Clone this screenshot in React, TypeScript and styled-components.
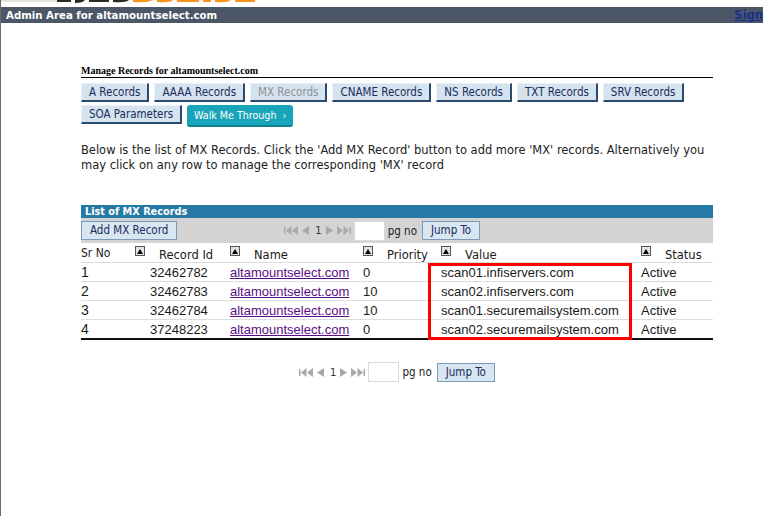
import React from "react";
import styled, { createGlobalStyle } from "styled-components";

const GlobalStyle = createGlobalStyle`
  html, body { margin: 0; padding: 0; background: #fff; }
  body { font-family: "DejaVu Sans Condensed", "DejaVu Sans", sans-serif; }
`;

const Page = styled.div`
  width: 763px;
  min-height: 516px;
  box-sizing: border-box;
  border-left: 1px solid #6a6a6a;
`;

const LogoStrip = styled.div`
  height: 7px;
  overflow: hidden;
  display: flex;
`;

const TopBar = styled.div`
  height: 16px;
  background: #4b5666;
  display: flex;
  align-items: center;
  justify-content: space-between;
  padding-left: 5px;
  overflow: hidden;
`;

const TopTitle = styled.span`
  color: #fff;
  font-family: "DejaVu Sans", sans-serif;
  font-weight: bold;
  font-size: 10.2px;
`;

const SignLink = styled.a`
  color: #1c2e8c;
  font-family: "DejaVu Sans", sans-serif;
  font-weight: bold;
  font-size: 11.5px;
  text-decoration: underline;
  white-space: nowrap;
  margin-right: 0;
`;

const Main = styled.div`
  width: 632px;
  margin-left: 80px;
  padding-top: 42px;
`;

const Heading = styled.div`
  font-family: "Liberation Serif", serif;
  font-weight: bold;
  font-size: 10px;
  color: #000;
  line-height: 11px;
  padding-bottom: 1px;
  border-bottom: 1px solid #000;
`;

const ButtonRows = styled.div`
  display: flex;
  flex-wrap: wrap;
  column-gap: 5px;
  row-gap: 3px;
  margin-top: 5px;
  align-items: flex-start;
`;

const TabButton = styled.button<{ $disabled?: boolean }>`
  height: 19px;
  padding: 0 7px;
  margin: 0;
  background: #d5e3ee;
  border-style: solid;
  border-width: 1px 2px 2px 1px;
  border-color: #e9f1f7 #2a4a6e #2a4a6e #e9f1f7;
  color: ${(p) => (p.$disabled ? "#8c9298" : "#1b2b5c")};
  font-family: "DejaVu Sans Condensed", "DejaVu Sans", sans-serif;
  font-size: 11.5px;
  line-height: 15px;
  cursor: pointer;
`;

const WalkButton = styled.button`
  height: 22px;
  margin: 0;
  padding: 0 7px;
  background: #19a5b9;
  border: none;
  border-bottom: 2px solid #11808f;
  border-radius: 3px;
  color: #fff;
  font-family: "DejaVu Sans Condensed", "DejaVu Sans", sans-serif;
  font-size: 10.6px;
  display: flex;
  align-items: center;
  gap: 6px;
  cursor: pointer;
`;

const Description = styled.p`
  margin: 15px 0 0 0;
  font-size: 12.75px;
  line-height: 15px;
  color: #222;
`;

const TableBox = styled.div`
  margin-top: 33px;
  position: relative;
`;

const TableTitle = styled.div`
  height: 13px;
  background: #2679a5;
  color: #fff;
  font-weight: bold;
  font-size: 10.8px;
  line-height: 13px;
  padding-left: 4px;
`;

const Toolbar = styled.div`
  height: 25px;
  background: #d4d4d4;
  display: flex;
  align-items: center;
`;

const LightButton = styled.button`
  height: 19px;
  margin: 0;
  padding: 0 8px;
  background: #d7e6f1;
  border: 1px solid #7f9ab5;
  color: #1b2b5c;
  font-family: "DejaVu Sans Condensed", "DejaVu Sans", sans-serif;
  font-size: 11.5px;
  line-height: 15px;
  cursor: pointer;
`;

const Pager = styled.div<{ $offset: number }>`
  display: flex;
  align-items: center;
  margin-left: ${(p) => p.$offset}px;
  font-size: 11.5px;
  color: #222;
`;

const PagerCentered = styled.div`
  display: flex;
  justify-content: center;
  margin-top: 22px;
`;

const PageNum = styled.span`
  font-family: "DejaVu Sans", sans-serif;
  font-size: 10px;
  color: #333;
  margin: 0 4px 0 6px;
`;

const PageInput = styled.input`
  width: 31px;
  height: 20px;
  box-sizing: border-box;
  border: 1px solid #dadada;
  background: #fff;
  margin: 0 3px 0 3px;
  padding: 0;
`;

const PgLabel = styled.span`
  margin-right: 5px;
`;

const Grid = styled.div`
  display: grid;
  grid-template-columns: 54px 95px 133px 78px 200px 72px;
  font-family: "Liberation Sans", Arial, sans-serif;
  font-size: 13px;
  color: #1a1a1a;
  border-bottom: 2px solid #111;
`;

const HeadCell = styled.div`
  height: 20px;
  display: flex;
  align-items: flex-start;
  gap: 14px;
  border-bottom: 1px solid #dcdcdc;
  box-sizing: border-box;
`;

const HeadText = styled.span<{ $first?: boolean }>`
  font-family: ${(p) =>
    p.$first
      ? `"DejaVu Sans Condensed", "DejaVu Sans", sans-serif`
      : `"DejaVu Sans", sans-serif`};
  font-size: ${(p) => (p.$first ? "12px" : "11.5px")};
  line-height: 14px;
  margin-top: ${(p) => (p.$first ? 3 : 5)}px;
`;

const SortIcon = styled.span`
  width: 10px;
  height: 10px;
  box-sizing: border-box;
  border: 1px solid #555;
  background: #e4e4e4;
  display: inline-flex;
  align-items: center;
  justify-content: center;
  margin-top: 3px;
  flex-shrink: 0;
`;

const Cell = styled.div<{ $pad?: number; $last?: boolean }>`
  height: ${(p) => (p.$last ? 18 : 19)}px;
  box-sizing: border-box;
  display: flex;
  align-items: center;
  padding-left: ${(p) => p.$pad ?? 0}px;
  border-bottom: ${(p) => (p.$last ? "none" : "1px solid #dcdcdc")};
`;

const FirstCell = styled(Cell)`
  font-size: 14px;
`;

const DomainLink = styled.a`
  color: #5b0d87;
  text-decoration: underline;
  cursor: pointer;
`;

const Highlight = styled.div`
  position: absolute;
  left: 347px;
  top: 58px;
  width: 204px;
  height: 77px;
  box-sizing: border-box;
  border: 3px solid #f00;
  pointer-events: none;
`;

const Tri = ({ dir }: { dir: "l" | "r" }) => (
  <svg width="7" height="9" viewBox="0 0 7 9">
    {dir === "l" ? (
      <polygon points="7,0 7,9 0,4.5" fill="#a9a9a9" />
    ) : (
      <polygon points="0,0 0,9 7,4.5" fill="#a9a9a9" />
    )}
  </svg>
);

const DoubleTri = ({ dir }: { dir: "l" | "r" }) => (
  <svg width="14" height="9" viewBox="0 0 14 9">
    {dir === "l" ? (
      <>
        <rect x="0" y="1" width="1.5" height="7" fill="#a9a9a9" />
        <polygon points="7.5,0 7.5,9 2,4.5" fill="#a9a9a9" />
        <polygon points="14,0 14,9 8,4.5" fill="#a9a9a9" />
      </>
    ) : (
      <>
        <polygon points="0,0 0,9 6,4.5" fill="#a9a9a9" />
        <polygon points="6.5,0 6.5,9 12,4.5" fill="#a9a9a9" />
        <rect x="12.5" y="1" width="1.5" height="7" fill="#a9a9a9" />
      </>
    )}
  </svg>
);

const ArrowGap = styled.span`
  display: inline-flex;
  align-items: center;
  gap: 4px;
`;

const PagerControls = ({ offset }: { offset: number }) => (
  <Pager $offset={offset}>
    <ArrowGap>
      <DoubleTri dir="l" />
      <Tri dir="l" />
    </ArrowGap>
    <PageNum>1</PageNum>
    <ArrowGap>
      <Tri dir="r" />
      <DoubleTri dir="r" />
    </ArrowGap>
    <PageInput />
    <PgLabel>pg no</PgLabel>
    <LightButton>Jump To</LightButton>
  </Pager>
);

const Sort = () => (
  <SortIcon>
    <svg width="6" height="5" viewBox="0 0 6 5">
      <polygon points="3,0 6,5 0,5" fill="#000" />
    </svg>
  </SortIcon>
);

const Logo = () => (
  <svg width="260" height="7" viewBox="0 0 260 7">
    <rect x="0" y="0" width="56" height="1.5" fill="#dcdcdc" />
    <path d="M56 0 h14 v2 h-14z M74 0 h10 q-2 3 -10 3z M88 0 h20 v2 h-20z M112 0 h16 q-3 3 -16 2z" fill="#2a2a2a" />
    <path d="M132 0 h20 q-6 3 -20 2z M156 0 h16 q-2 3 -16 2z M176 0 h22 v2 h-22z M202 0 h8 v2 h-8z M214 0 h16 q-4 3 -16 2z M234 0 h20 v2 h-20z" fill="#f7941d" />
  </svg>
);

const tabs = [
  { label: "A Records" },
  { label: "AAAA Records" },
  { label: "MX Records", disabled: true },
  { label: "CNAME Records" },
  { label: "NS Records" },
  { label: "TXT Records" },
  { label: "SRV Records" },
];

const rows = [
  ["1", "32462782", "altamountselect.com", "0", "scan01.infiservers.com", "Active"],
  ["2", "32462783", "altamountselect.com", "10", "scan02.infiservers.com", "Active"],
  ["3", "32462784", "altamountselect.com", "10", "scan01.securemailsystem.com", "Active"],
  ["4", "37248223", "altamountselect.com", "0", "scan02.securemailsystem.com", "Active"],
];

const headers = ["Record Id", "Name", "Priority", "Value", "Status"];

export default function App() {
  return (
    <Page>
      <GlobalStyle />
      <LogoStrip>
        <Logo />
      </LogoStrip>
      <TopBar>
        <TopTitle>Admin Area for altamountselect.com</TopTitle>
        <SignLink href="#">Sign</SignLink>
      </TopBar>
      <Main>
        <Heading>Manage Records for altamountselect.com</Heading>
        <ButtonRows>
          {tabs.map((t) => (
            <TabButton key={t.label} $disabled={t.disabled}>
              {t.label}
            </TabButton>
          ))}
          <TabButton>SOA Parameters</TabButton>
          <WalkButton>
            Walk Me Through <span>›</span>
          </WalkButton>
        </ButtonRows>
        <Description>
          Below is the list of MX Records. Click the 'Add MX Record' button to
          add more 'MX' records. Alternatively you may click on any row to
          manage the corresponding 'MX' record
        </Description>
        <TableBox>
          <TableTitle>List of MX Records</TableTitle>
          <Toolbar>
            <LightButton>Add MX Record</LightButton>
            <PagerControls offset={107} />
          </Toolbar>
          <Grid>
            <HeadCell>
              <HeadText $first>Sr No</HeadText>
            </HeadCell>
            {headers.map((h) => (
              <HeadCell key={h}>
                <Sort />
                <HeadText>{h}</HeadText>
              </HeadCell>
            ))}
            {rows.map((r, i) => {
              const last = i === rows.length - 1;
              return (
                <React.Fragment key={r[0]}>
                  <FirstCell $last={last}>{r[0]}</FirstCell>
                  <Cell $last={last} $pad={15}>
                    {r[1]}
                  </Cell>
                  <Cell $last={last}>
                    <DomainLink href="#">{r[2]}</DomainLink>
                  </Cell>
                  <Cell $last={last}>{r[3]}</Cell>
                  <Cell $last={last}>{r[4]}</Cell>
                  <Cell $last={last}>{r[5]}</Cell>
                </React.Fragment>
              );
            })}
          </Grid>
          <Highlight />
        </TableBox>
        <PagerCentered>
          <PagerControls offset={0} />
        </PagerCentered>
      </Main>
    </Page>
  );
}
